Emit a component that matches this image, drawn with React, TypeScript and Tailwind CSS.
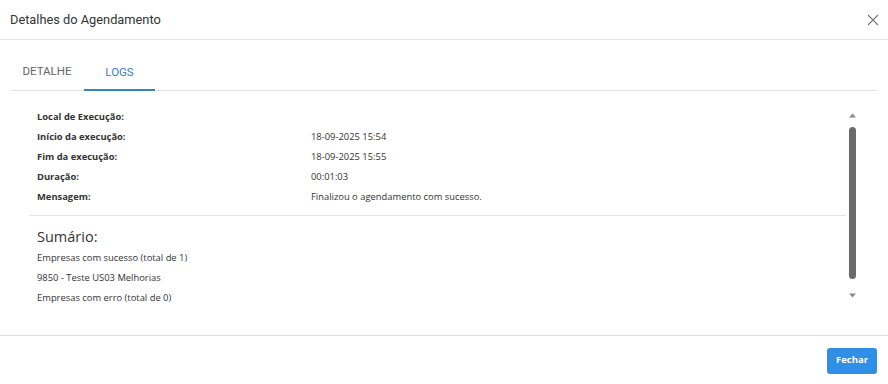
import React from "react";

const rows: [string, string][] = [
  ["Local de Execução:", ""],
  ["Início da execução:", "18-09-2025 15:54"],
  ["Fim da execução:", "18-09-2025 15:55"],
  ["Duração:", "00:01:03"],
  ["Mensagem:", "Finalizou o agendamento com sucesso."],
];

export default function App() {
  return (
    <div className="w-[888px] h-[384px] bg-white flex flex-col text-[#333]" style={{ fontFamily: "'Open Sans', sans-serif" }}>
      <div className="h-[40px] shrink-0 flex items-center justify-between pl-[10px] pr-[9px] border-b border-[#e3e3e3]">
        <span className="text-[12.8px] text-[#333]" style={{ fontFamily: "Roboto, sans-serif" }}>Detalhes do Agendamento</span>
        <svg width="12" height="12" viewBox="0 0 12 12" className="text-[#777]">
          <path d="M1 1L11 11M11 1L1 11" stroke="currentColor" strokeWidth="1.1" />
        </svg>
      </div>
      <div className="mx-[10px] mt-[16px] flex h-[35px] border-b border-[#e3e3e3] shrink-0" style={{ fontFamily: "Roboto, sans-serif" }}>
        <div className="w-[74px] flex items-center justify-center text-[11.5px] text-[#666] pb-[2px]">DETALHE</div>
        <div className="w-[71px] flex items-center justify-center text-[11.5px] text-[#3a7fc4] border-b-2 border-[#3a7fc4] -mb-[1px]">LOGS</div>
      </div>
      <div className="flex-1 flex pl-[29px] pr-[30px] pt-[16px] min-h-0">
        <div className="flex-1 flex flex-col">
          {rows.map(([l, v]) => (
            <div key={l} className="h-[20px] flex items-center text-[9.4px] pl-[8px]">
              <span className="w-[274px] font-bold">{l}</span>
              <span>{v}</span>
            </div>
          ))}
          <div className="mt-[8px] border-t border-[#e5e5e5]" />
          <div className="pl-[8px] pt-[10px] text-[14.5px] leading-[22px]">Sumário:</div>
          <div className="pl-[8px] h-[20px] flex items-center text-[9.4px]">Empresas com sucesso (total de 1)</div>
          <div className="pl-[8px] h-[20px] flex items-center text-[9.4px]">9850 - Teste US03 Melhorias</div>
          <div className="pl-[8px] h-[20px] flex items-center text-[9.4px]">Empresas com erro (total de 0)</div>
        </div>
        <div className="w-[11px] flex flex-col items-center pt-[6px] ml-[1px]">
          <svg width="7" height="5" viewBox="0 0 7 5"><path d="M0 4.5L3.5 0.5L7 4.5Z" fill="#8a8a8a" /></svg>
          <div className="w-[7px] h-[152px] mt-[9px] rounded-full bg-[#6b6b6b]" />
          <svg width="7" height="5" viewBox="0 0 7 5" className="mt-[14px]"><path d="M0 0.5L3.5 4.5L7 0.5Z" fill="#8a8a8a" /></svg>
        </div>
      </div>
      <div className="h-[49px] shrink-0 border-t border-[#e0e0e0] flex items-center justify-end pr-[11px]">
        <button className="w-[50px] h-[26px] mt-[1px] rounded-[3px] bg-[#2f8ee5] text-white text-[9.5px] font-bold" style={{ fontFamily: "'Open Sans', sans-serif" }}>Fechar</button>
      </div>
    </div>
  );
}
